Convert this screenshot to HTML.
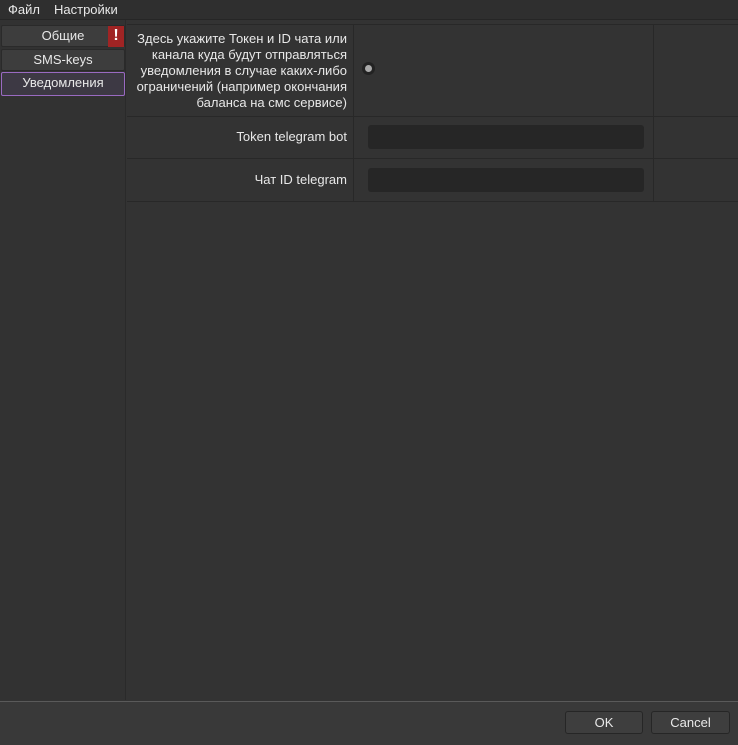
<!DOCTYPE html>
<html><head><meta charset="utf-8"><style>
*{box-sizing:border-box;margin:0;padding:0}
body{width:738px;height:745px;background:#333;font-family:"Liberation Sans","DejaVu Sans",sans-serif;font-size:13px;color:#e8e8e8;position:relative;overflow:hidden}
.menu{position:absolute;left:0;top:0;width:738px;height:20px;background:#2f2f2f;border-bottom:1px solid #262626}
.menu span{position:absolute;top:2px}
.side{position:absolute;left:0;top:20px;width:126px;height:680px;background:#323232;border-right:1px solid #2a2a2a}
.btn{position:absolute;left:1px;width:124px;height:22px;background:#3d3d3d;border:1px solid #2a2a2a;border-radius:2px;text-align:center;line-height:20px;font-size:13px}
.warn{position:absolute;right:0;top:0;width:16px;height:21px;background:#a02424;color:#fff;font-weight:bold;font-size:16px;line-height:20px;text-align:center}
.content{position:absolute;left:127px;top:24px;width:611px;height:676px;background:#333}
.hl{position:absolute;left:127px;width:611px;height:1px;background:#282828}
.vl{position:absolute;width:1px;background:#282828}
.lbl{position:absolute;right:391px;text-align:right;font-size:13px;line-height:16px;white-space:nowrap}
.inp{position:absolute;left:368px;width:276px;height:24px;background:#262626;border-radius:3px}
.bottom{position:absolute;left:0;top:701px;width:738px;height:44px;background:#393939;border-top:1px solid #5a5a5a}
.b2{position:absolute;top:711px;height:23px;background:#3e3e3e;border:1px solid #262626;border-radius:3px;text-align:center;line-height:21px;font-size:13px}
</style></head><body>
<div class="menu"><span style="left:8px">Файл</span><span style="left:54px">Настройки</span></div>
<div class="side">
<div class="btn" style="top:5px">Общие<div class="warn">!</div></div>
<div class="btn" style="top:29px">SMS-keys</div>
<div class="btn" style="top:52px;height:24px;background:#3d3944;border-color:#9a6ac2">Уведомления</div>
</div>
<div class="content"></div>
<div class="hl" style="top:24px"></div>
<div class="hl" style="top:116px"></div>
<div class="hl" style="top:158px"></div>
<div class="hl" style="top:201px"></div>
<div class="vl" style="left:353px;top:24px;height:177px"></div>
<div class="vl" style="left:653px;top:24px;height:177px"></div>
<div class="lbl" style="top:31px">Здесь укажите Токен и ID чата или<br>канала куда будут отправляться<br>уведомления в случае каких-либо<br>ограничений (например окончания<br>баланса на смс сервисе)</div>
<div style="position:absolute;left:362px;top:62px;width:13px;height:13px;border-radius:50%;background:#222"><div style="position:absolute;left:3px;top:3px;width:7px;height:7px;border-radius:50%;background:#aaa"></div></div>
<div class="lbl" style="top:129px">Token telegram bot</div>
<div class="inp" style="top:125px"></div>
<div class="lbl" style="top:172px">Чат ID telegram</div>
<div class="inp" style="top:168px"></div>
<div class="bottom"></div>
<div class="b2" style="left:565px;width:78px">OK</div>
<div class="b2" style="left:651px;width:79px">Cancel</div>
</body></html>
